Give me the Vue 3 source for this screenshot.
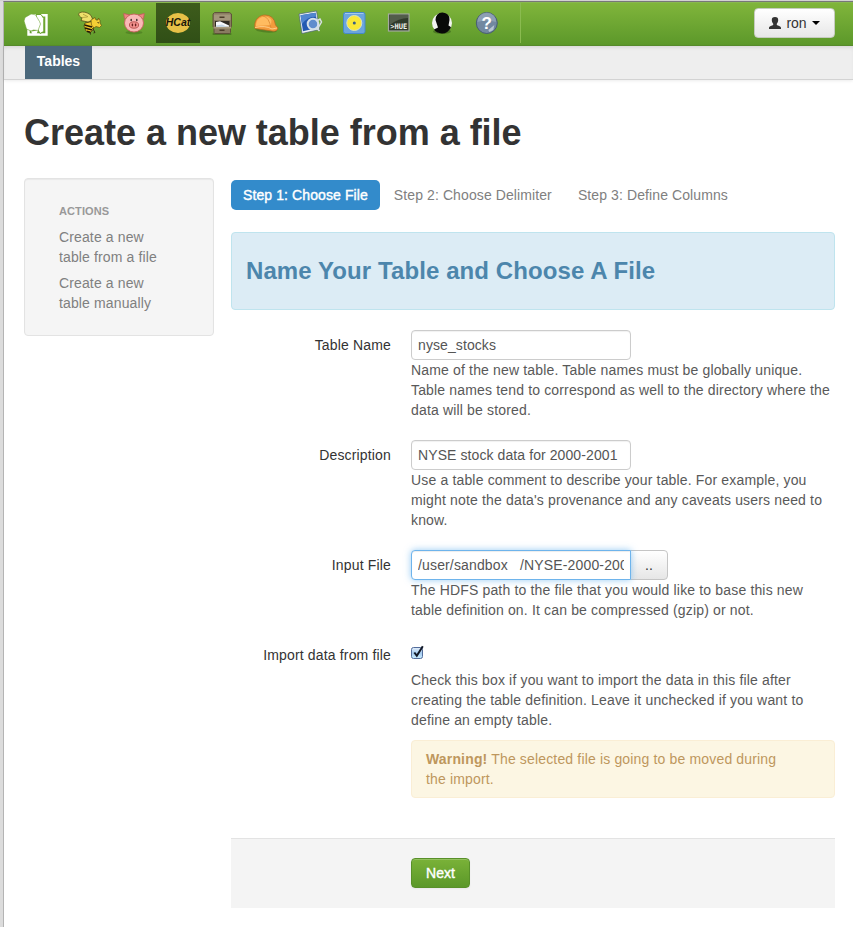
<script setup>
import { ref } from 'vue'

const steps = ['Step 1: Choose File', 'Step 2: Choose Delimiter', 'Step 3: Define Columns']
const current = ref(0)
const tableName = ref('nyse_stocks')
const description = ref('NYSE stock data for 2000-2001')
const inputFile = ref('/user/sandbox   /NYSE-2000-2001')
</script>

<template>
  <div class="window">
    <div class="page">
      <header class="navbar">
        <a class="brand">
          <svg width="26" height="24" viewBox="0 0 26 24">
            <path d="M8 1.200H23.500V20.500H5.500V15" fill="none" stroke="#fff" stroke-width="2.400" />
            <path d="M13 .5H18L20.800 4.500V17.500L17 19.500 14.500 15Z" fill="#fff" stroke="#6ba32f" stroke-width="1" />
            <path d="M2 3.500 8 0 12.500 .8 16.500 7.500 17.500 10 15 16.500 10.500 16 8 17 3.500 15 1 7Z" fill="#fff" stroke="#6ba32f" stroke-width=".6" />
            <path d="M8 17.500 15 16.500 13.500 20H9.500Z" fill="#fff" />
          </svg>
        </a>
        <nav class="apps">
          <a class="app">
            <svg width="26" height="26" viewBox="-1 -1 26 26">
              <path d="M7 12 14 10.500 16.500 13 15 19 12 22 8 20 6 15Z" fill="#f1c92c" stroke="#302508" stroke-width=".6" />
              <path d="m6.500 14 7.500 2M7 17l7 2M9 20.300l3.500 1" stroke="#211907" stroke-width="1.500" />
              <path d="M.8 2.500C3 .2 9 .5 13 4.500L15 9 10 11 3 9.500 4 7C2 6 0 4 .8 2.500Z" fill="#efe06c" stroke="#4a4115" stroke-width=".7" />
              <path d="M4 6.500 9.500 6M5 3.200l5 2.500" stroke="#a28f30" stroke-width=".7" />
              <path d="M13 9 17 6.500 18 9 20 9 20.500 7 22 9.500 22 12 23.500 14.500 21.500 16.500 18 15.500 16 17 13.500 14Z" fill="#f4cf35" stroke="#58440d" stroke-width=".6" />
              <path d="m19.500 11.500 1.500.5M14.500 17l2.500 4.500-1.500.5M12 21l.5 2.500" fill="none" stroke="#2f2610" stroke-width=".9" />
            </svg>
          </a>
          <a class="app">
            <svg width="24" height="24" viewBox="0 0 24 24">
              <ellipse cx="12" cy="21.500" rx="8.500" ry="1.800" fill="#3e6a1b" opacity=".45" />
              <path d="m2.500 8-.8-5.500L8 4M16 4l6.300-1.500L21.500 8" fill="#ee8481" stroke="#bd5c58" stroke-width=".8" />
              <ellipse cx="12" cy="12" rx="9.500" ry="9" fill="#fab9b7" stroke="#c9605e" stroke-width=".9" />
              <ellipse cx="12" cy="14" rx="4.600" ry="3.200" fill="#f3918e" stroke="#b34f4d" stroke-width=".9" />
              <ellipse cx="10.400" cy="14" rx=".8" ry="1.400" fill="#6b2220" />
              <ellipse cx="13.600" cy="14" rx=".8" ry="1.400" fill="#6b2220" />
              <ellipse cx="9.200" cy="9" rx=".8" ry="1.300" fill="#40302f" />
              <ellipse cx="14.800" cy="9" rx=".8" ry="1.300" fill="#40302f" />
            </svg>
          </a>
          <a class="app selected">
            <svg width="30" height="24" viewBox="-2 0 30 24">
              <ellipse cx="13" cy="12" rx="12" ry="10" fill="#e7c047" />
              <text x="13" y="15.300" text-anchor="middle" class="hcat">HCat</text>
            </svg>
          </a>
          <a class="app">
            <svg width="24" height="24" viewBox="0 0 24 24">
              <rect x="2.500" y="22" width="19" height="2" rx="1" fill="#345217" opacity=".5" />
              <path d="M3 3 4.500 1.500H19.500L21.500 3V15.500L20.500 17V21.500L19.500 22.500H5L4 21.500V17L3 15.500Z" fill="#897b61" stroke="#5b4d38" stroke-width=".9" />
              <path d="M4 3.500H20.500V9H4Z" fill="#a3967b" />
              <path d="M5 10H19.500V15.500H5Z" fill="#302a22" />
              <path d="m6 11 4-.8 9 4.300v1.300H6Z" fill="#f8f9fb" />
              <path d="m6 14.500 6-1 5 2.300H6Z" fill="#c4d5e4" />
              <path d="M3.500 16H21V17.500H3.500Z" fill="#a89a7d" />
              <path d="M9.500 5.500h5v1.500h-5ZM9.500 18.500h5v1.500h-5Z" fill="#4c3d2a" />
            </svg>
          </a>
          <a class="app">
            <svg width="26" height="24" viewBox="0 0 26 24">
              <path d="M4 20Q15 23 23 21l2-3H2Z" fill="#3d631a" opacity=".5" />
              <path d="M1.800 16C1 8 7 4 12 4Q21 4 22.500 14L25 17Q24 21 19 20L2 17.500Z" fill="#f39b3c" stroke="#b9691f" stroke-width=".7" />
              <path d="M3 15C3 9 7 5.500 12 5.500Q16 5.500 18.500 9L18 14Z" fill="#ffbb60" />
              <path d="M10 5Q16 6 18 17" fill="none" stroke="#d98832" stroke-width=".8" />
              <path d="M2 16.500Q12 14 19 18L24 17" fill="none" stroke="#ffd391" stroke-width=".9" />
            </svg>
          </a>
          <a class="app">
            <svg width="26" height="26" viewBox="-1 0 26 26">
              <path d="m1 4 17.500-3L21.500 19.500 4 23.500Z" fill="#eef2f4" stroke="#47627a" stroke-width=".7" />
              <path d="m2.500 5.300 15-2.500 2.500 15L5 21.300Z" fill="#245ab2" />
              <path d="m2.500 5.300 15-2.500.6 4Q10 6 4 14Z" fill="#5186cf" />
              <circle cx="15" cy="14" r="5.300" fill="#88afe0" fill-opacity=".6" stroke="#d4e0e9" stroke-width="2" />
              <path d="m18.500 11 3.500-2 1.500 3-4 7 2 2" fill="none" stroke="#d7dfe5" stroke-width="1.500" />
            </svg>
          </a>
          <a class="app">
            <svg width="26" height="24" viewBox="0 0 26 24">
              <rect x="2.500" y="1.500" width="21.500" height="21" rx="2" fill="#6ba5dd" stroke="#4589ca" />
              <path d="M4 2.500h18.500" stroke="#a4c9eb" />
              <circle cx="13.300" cy="12" r="7.500" fill="#fae837" stroke="#dbe4bd" stroke-width="1" />
              <circle cx="13.300" cy="12" r="1.500" fill="#385e87" />
            </svg>
          </a>
          <a class="app">
            <svg width="26" height="24" viewBox="0 0 26 24">
              <rect x="3.500" y="3" width="20.500" height="17" fill="#303b2b" stroke="#a4aaa0" stroke-width="1.200" />
              <path d="M4.500 4h18.500v3Q14 7 4.500 14Z" fill="#525d4b" />
              <text x="13.800" y="18" text-anchor="middle" textLength="17" lengthAdjust="spacingAndGlyphs" class="hue">&gt;HUE</text>
            </svg>
          </a>
          <a class="app">
            <svg width="24" height="24" viewBox="0 0 24 24">
              <ellipse cx="12" cy="20.500" rx="9" ry="2.500" fill="#3b611b" opacity=".6" />
              <circle cx="12" cy="12" r="10" fill="#f2f4f1" />
              <path d="M5.500 9Q6 1.300 12.500 1.500Q20 2 19.500 9L18.500 14.500Q20.500 15.500 21 16.500Q18 22.500 12 22.500Q6 22 4 18.500L8 16.500Z" fill="#080a08" />
            </svg>
          </a>
          <a class="app">
            <svg width="26" height="24" viewBox="0 0 26 24">
              <circle cx="13.800" cy="12" r="10.500" fill="#7288a0" stroke="#475d72" />
              <path d="M4.300 11a9.500 9.500 0 0 1 19 0Q13 8 4.300 11Z" fill="#99aabc" opacity=".7" />
              <path d="m15.300 19 6-5-1 5-4 2Z" fill="#b8c6d3" />
              <text x="13.800" y="18" text-anchor="middle" class="help">?</text>
            </svg>
          </a>
        </nav>
        <button class="user">
          <svg width="12" height="12" viewBox="0 0 12 12">
            <path d="M6 0C8.300 0 9.300 1.200 9.200 3.200C9.100 5 8.200 6 7.800 6.700V8C9 8.800 12 9 12 11V12H0V11C0 9 3 8.800 4.200 8V6.700C3.800 6 2.900 5 2.800 3.200C2.700 1.200 3.700 0 6 0Z" fill="#333" />
          </svg>
          <span>ron</span>
          <i class="caret"></i>
        </button>
      </header>
      <div class="subnav"><a>Tables</a></div>

      <main class="content">
        <h1>Create a new table from a file</h1>
        <div class="columns">
          <aside class="sidebar">
            <h6>Actions</h6>
            <a>Create a new table from a file</a>
            <a>Create a new table manually</a>
          </aside>
          <section class="main">
            <nav class="steps">
              <a v-for="(step, i) in steps" :key="step" :class="{ active: i === current }">{{ step }}</a>
            </nav>
            <div class="banner"><h3>Name Your Table and Choose A File</h3></div>
            <form @submit.prevent>
              <div class="group">
                <label>Table Name</label>
                <div class="controls">
                  <input v-model="tableName" class="field" type="text" />
                  <p>Name of the new table. Table names must be globally unique. Table names tend to correspond as well to the directory where the data will be stored.</p>
                </div>
              </div>
              <div class="group">
                <label>Description</label>
                <div class="controls">
                  <input v-model="description" class="field" type="text" />
                  <p>Use a table comment to describe your table. For example, you might note the data's provenance and any caveats users need to know.</p>
                </div>
              </div>
              <div class="group">
                <label>Input File</label>
                <div class="controls">
                  <div class="append">
                    <input v-model="inputFile" class="field focused" type="text" />
                    <button type="button" class="browse">..</button>
                  </div>
                  <p>The HDFS path to the file that you would like to base this new table definition on. It can be compressed (gzip) or not.</p>
                </div>
              </div>
              <div class="group last">
                <label>Import data from file</label>
                <div class="controls">
                  <div class="check">
                    <svg width="15" height="16" viewBox="0 0 15 16">
                      <defs>
                        <linearGradient id="checkFill" x2="0" y2="1">
                          <stop stop-color="#e5effa" /><stop offset=".5" stop-color="#a5cbf0" /><stop offset="1" stop-color="#c8ecff" />
                        </linearGradient>
                      </defs>
                      <rect x=".5" y="3.500" width="11" height="11" rx="2" fill="url(#checkFill)" stroke="#526c9b" />
                      <path d="m3.300 8.500 2.500 3.200L11.800 2.200" fill="none" stroke="#111827" stroke-width="2" />
                    </svg>
                  </div>
                  <p>Check this box if you want to import the data in this file after creating the table definition. Leave it unchecked if you want to define an empty table.</p>
                  <div class="warning"><strong>Warning!</strong> The selected file is going to be moved during the import.</div>
                </div>
              </div>
              <div class="actions"><button class="next">Next</button></div>
            </form>
          </section>
        </div>
      </main>
    </div>
  </div>
</template>

<style>
body {
  background: #fff;
}
</style>

<style scoped>
* {
  box-sizing: border-box;
}
.window {
  height: 927px;
  overflow: hidden;
  padding-left: 3px;
  background: #dcdcdc;
  color: #333;
  font: 14px/20px 'Liberation Sans', Arial, sans-serif;
  border-top: 1px solid #d2d2d2;
}
.page {
  height: 926px;
  background: #fff;
  border-left: 1px solid #b4b4b4;
  border-top: 1px solid #777;
}
.navbar {
  display: flex;
  align-items: flex-start;
  height: 44px;
  padding: 1px 18px 0 19px;
  background: linear-gradient(#80b53b, #5c982a);
  border-top: 1px solid #88b84e;
  border-bottom: 1px solid #588c2c;
}
.brand {
  width: 45px;
  height: 40px;
  display: flex;
  align-items: center;
}
.brand svg {
  margin-top: 4px;
}
.apps {
  display: flex;
  margin-top: -1px;
  padding-right: 12px;
  border-right: 1px solid #8abb50;
}
.app {
  display: flex;
  align-items: center;
  justify-content: center;
  width: 44px;
  height: 40px;
}
.app svg {
  flex: none;
}
.selected {
  background: linear-gradient(#3e5c1c, #304f16);
}
.hcat {
  font: italic bold 10.500px 'Liberation Sans', sans-serif;
  fill: #17150a;
}
.hue {
  font: bold 7.500px 'DejaVu Sans Mono', monospace;
  fill: #f3f5f0;
}
.help {
  font: bold 17px 'Liberation Sans', sans-serif;
  fill: #fff;
}
.user {
  display: flex;
  align-items: center;
  justify-content: center;
  width: 81px;
  height: 30px;
  margin: 4px 0 0 auto;
  padding: 0;
  border: 1px solid #c6cbc0;
  border-radius: 4px;
  background: linear-gradient(#fff, #e7e7e7);
  color: #333;
  font: inherit;
}
.user span {
  margin: 0 5px;
}
.caret {
  border: 4px solid transparent;
  border-top-color: #000;
  border-bottom: 0;
}
.subnav {
  height: 34px;
  padding-left: 21px;
  background: #eee;
  border-bottom: 1px solid #d3d3d3;
  box-shadow: 0 1px 3px rgba(0, 0, 0, 0.08), inset 0 3px 4px -2px rgba(0, 0, 0, 0.12);
}
.subnav a {
  display: block;
  width: 67px;
  height: 33px;
  padding-top: 5px;
  background: #4b687b;
  color: #fff;
  font-weight: bold;
  text-align: center;
}
.content {
  padding: 32px 18px 0 20px;
}
h1 {
  margin: 0;
  padding-top: 1px;
  font-size: 36px;
  line-height: 40px;
  letter-spacing: -0.02px;
}
.columns {
  display: flex;
  gap: 17px;
  margin-top: 25px;
}
.sidebar {
  width: 190px;
  height: 158px;
  padding: 22px 34px;
  background: #f5f5f5;
  border: 1px solid #e3e3e3;
  border-radius: 4px;
  box-shadow: inset 0 1px 1px rgba(0, 0, 0, 0.05);
}
.sidebar h6 {
  margin: 0 0 6px;
  color: #999;
  font-size: 11px;
  line-height: 20px;
  letter-spacing: 0.1px;
  text-transform: uppercase;
}
.sidebar a {
  display: block;
  width: 104px;
  margin-bottom: 6px;
  color: #808080;
  letter-spacing: 0.13px;
}
.main {
  width: 604px;
  padding-top: 2px;
}
.steps {
  display: flex;
  gap: 2px;
}
.steps a {
  padding: 5px 12px;
  border-radius: 5px;
  color: #808080;
  letter-spacing: 0.1px;
  white-space: nowrap;
}
.steps .active {
  background: #338bcb;
  color: #fff;
  -webkit-text-stroke: 0.4px #fff;
}
.banner {
  height: 78px;
  margin: 22px 0 20px;
  padding: 18px 14px;
  background: #dcecf5;
  border: 1px solid #bfe4ee;
  border-radius: 4px;
}
h3 {
  margin: 0;
  color: #4c86ac;
  font-size: 24px;
  line-height: 40px;
  letter-spacing: 0.09px;
}
.group {
  display: flex;
  gap: 20px;
  margin-bottom: 20px;
  letter-spacing: 0.16px;
}
.group label {
  width: 160px;
  padding-top: 5px;
  text-align: right;
}
.controls {
  width: 424px;
}
.controls p {
  margin: 0;
  color: #595959;
}
.field {
  display: block;
  width: 220px;
  height: 30px;
  padding: 4px 6px;
  border: 1px solid #ccc;
  border-radius: 4px;
  background: #fff;
  color: #555;
  font: inherit;
  letter-spacing: 0.09px;
  box-shadow: inset 0 1px 1px rgba(0, 0, 0, 0.06);
}
.append {
  display: flex;
}
.append .focused {
  position: relative;
  border-color: #6eb4ec;
  border-radius: 4px 0 0 4px;
  letter-spacing: 0.15px;
  box-shadow: inset 0 1px 1px rgba(0, 0, 0, 0.075), 0 0 7px rgba(82, 168, 236, 0.6);
}
.browse {
  width: 38px;
  height: 30px;
  margin-left: -1px;
  border: 1px solid #c5c5c5;
  border-radius: 0 4px 4px 0;
  background: linear-gradient(#fff, #e6e6e6);
  color: #333;
  font: inherit;
}
.check {
  height: 30px;
  padding-top: 4px;
}
.check svg {
  display: block;
}
.warning {
  margin-top: 10px;
  padding: 8px 35px 8px 14px;
  background: #fcf6e3;
  border: 1px solid #faeed5;
  border-radius: 4px;
  color: #be975d;
}
.last {
  margin-bottom: 40px;
}
.actions {
  height: 70px;
  padding: 19px 0 0 180px;
  background: #f4f4f4;
  border-top: 1px solid #e3e3e3;
}
.next {
  display: block;
  width: 59px;
  height: 30px;
  padding: 0;
  border: 1px solid #589029;
  border-radius: 4px;
  background: linear-gradient(#7ab238, #5b9829);
  box-shadow: inset 0 1px 0 rgba(255, 255, 255, 0.2), 0 1px 2px rgba(0, 0, 0, 0.05);
  color: #fff;
  font: inherit;
  -webkit-text-stroke: 0.4px #fff;
}
</style>
